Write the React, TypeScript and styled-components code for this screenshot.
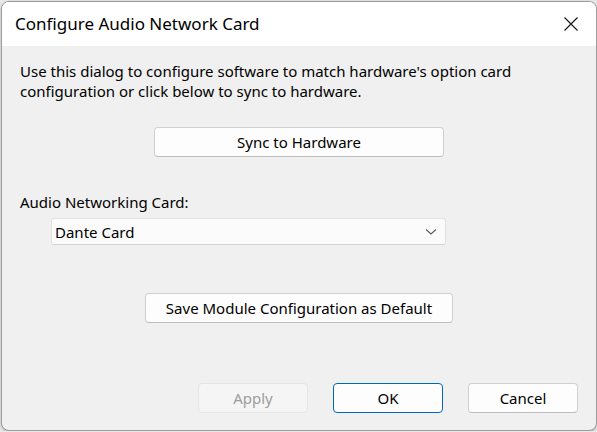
import React from "react"
import styled, {createGlobalStyle} from "styled-components"

const GlobalStyle = createGlobalStyle`
  html, body {
    margin: 0;
    padding: 0;
    background: #e9e9e9;
  }
  body {
    font-family: "Noto Sans", "Open Sans", sans-serif;
    color: #000;
  }
`

const Window = styled.div`
  box-sizing: border-box;
  width: 596px;
  height: 430px;
  margin: 1px 0 0 1px;
  border: 1px solid #9c9c9c;
  border-radius: 8px;
  overflow: hidden;
  display: flex;
  flex-direction: column;
  background: #f0f0f0;
  box-shadow: 0 1px 3px rgba(0, 0, 0, 0.25);
`

const TitleBar = styled.div`
  height: 44px;
  flex-shrink: 0;
  background: #ffffff;
  display: flex;
  align-items: center;
  justify-content: space-between;
  padding-left: 13px;
`

const Title = styled.span`
  font-size: 17px;
  margin-top: -2px;
`

const CloseButton = styled.button`
  width: 46px;
  height: 44px;
  margin-right: 2px;
  border: none;
  background: transparent;
  display: flex;
  align-items: center;
  justify-content: center;
  padding: 0;
`

const Body = styled.div`
  flex: 1;
  display: flex;
  flex-direction: column;
  padding: 15px 18px 17px 18px;
`

const Intro = styled.p`
  margin: 0;
  font-size: 15px;
  line-height: 20px;
`

const CenterRow = styled.div<{top: number}>`
  display: flex;
  justify-content: center;
  margin-top: ${p => p.top}px;
`

const PushButton = styled.button<{width: number; primary?: boolean}>`
  box-sizing: border-box;
  width: ${p => p.width}px;
  height: 30px;
  border-radius: 4px;
  border: 1px solid ${p => (p.primary ? "#0067c0" : "#d0d0d0")};
  border-bottom-color: ${p => (p.primary ? "#0067c0" : "#bdbdbd")};
  background: #fdfdfd;
  font-family: inherit;
  font-size: 15px;
  color: #000;
  padding: 0;

  &:disabled {
    background: #f5f5f5;
    border-color: #e5e5e5;
    color: #9d9d9d;
  }
`

const FieldLabel = styled.div`
  margin-top: 35px;
  font-size: 15px;
  line-height: 20px;
`

const Select = styled.div`
  box-sizing: border-box;
  margin: 6px 0 0 31px;
  width: 395px;
  height: 27px;
  background: #fbfbfb;
  border: 1px solid #e2e2e2;
  border-bottom-color: #d4d4d4;
  border-radius: 3px;
  display: flex;
  align-items: center;
  justify-content: space-between;
  padding: 0 8px 0 3px;
  font-size: 15px;
`

const Footer = styled.div`
  margin-top: auto;
  display: flex;
  justify-content: flex-end;
  gap: 25px;
`

const CloseIcon = () => (
  <svg width="16" height="16" viewBox="0 0 16 16">
    <path d="M1.5 1.5 L14.5 14.5 M14.5 1.5 L1.5 14.5" stroke="#1a1a1a" strokeWidth="1.2" fill="none" />
  </svg>
)

const Chevron = () => (
  <svg width="12" height="8" viewBox="0 0 12 8">
    <path d="M1 1.5 L6 6 L11 1.5" stroke="#5a5a5a" strokeWidth="1.1" fill="none" />
  </svg>
)

export default function App() {
  return (
    <>
      <GlobalStyle />
      <Window>
        <TitleBar>
          <Title>Configure Audio Network Card</Title>
          <CloseButton aria-label="Close">
            <CloseIcon />
          </CloseButton>
        </TitleBar>
        <Body>
          <Intro>
            Use this dialog to configure software to match hardware's option card
            <br />
            configuration or click below to sync to hardware.
          </Intro>
          <CenterRow top={26}>
            <PushButton width={290}>Sync to Hardware</PushButton>
          </CenterRow>
          <FieldLabel>Audio Networking Card:</FieldLabel>
          <Select>
            <span>Dante Card</span>
            <Chevron />
          </Select>
          <CenterRow top={48}>
            <PushButton width={308}>Save Module Configuration as Default</PushButton>
          </CenterRow>
          <Footer>
            <PushButton width={110} disabled>
              Apply
            </PushButton>
            <PushButton width={110} primary>
              OK
            </PushButton>
            <PushButton width={110}>Cancel</PushButton>
          </Footer>
        </Body>
      </Window>
    </>
  )
}
